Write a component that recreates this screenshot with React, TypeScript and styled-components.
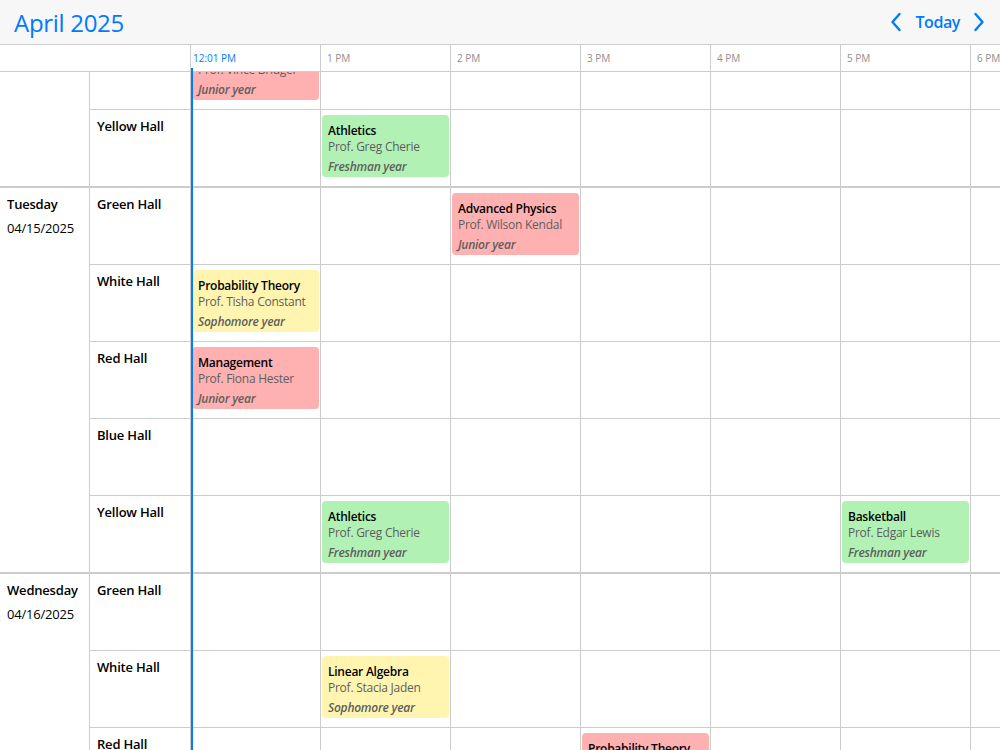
import { useLayoutEffect, useRef } from 'react';
import styled, { createGlobalStyle } from 'styled-components';

type Tone = 'red' | 'green' | 'yellow';

interface Booking {
  hour: number;
  title: string;
  prof: string;
  year: string;
  tone: Tone;
}

interface Resource {
  name: string;
  bookings: Booking[];
}

interface Day {
  name: string;
  date: string;
  resources: Resource[];
}

const HOURS = [12, 13, 14, 15, 16, 17, 18, 19];
const HALLS = ['Green Hall', 'White Hall', 'Red Hall', 'Blue Hall', 'Yellow Hall'];
const NOW_HOUR = 12;

const toneColors: Record<Tone, string> = {
  red: '#ffb1b1',
  green: '#b1f2b4',
  yellow: '#fff5b1'
};

const hourLabel = (h: number) => `${h > 12 ? h - 12 : h} PM`;

const makeDay = (name: string, date: string, bookings: Record<string, Booking[]>): Day => ({
  name,
  date,
  resources: HALLS.map((hall) => ({ name: hall, bookings: bookings[hall] || [] }))
});

const days: Day[] = [
  makeDay('Monday', '04/14/2025', {
    'Blue Hall': [
      { hour: 12, title: 'Computer Science', prof: 'Prof. Vince Bridger', year: 'Junior year', tone: 'red' }
    ],
    'Yellow Hall': [
      { hour: 13, title: 'Athletics', prof: 'Prof. Greg Cherie', year: 'Freshman year', tone: 'green' }
    ]
  }),
  makeDay('Tuesday', '04/15/2025', {
    'Green Hall': [
      { hour: 14, title: 'Advanced Physics', prof: 'Prof. Wilson Kendal', year: 'Junior year', tone: 'red' }
    ],
    'White Hall': [
      { hour: 12, title: 'Probability Theory', prof: 'Prof. Tisha Constant', year: 'Sophomore year', tone: 'yellow' }
    ],
    'Red Hall': [
      { hour: 12, title: 'Management', prof: 'Prof. Fiona Hester', year: 'Junior year', tone: 'red' }
    ],
    'Yellow Hall': [
      { hour: 13, title: 'Athletics', prof: 'Prof. Greg Cherie', year: 'Freshman year', tone: 'green' },
      { hour: 17, title: 'Basketball', prof: 'Prof. Edgar Lewis', year: 'Freshman year', tone: 'green' }
    ]
  }),
  makeDay('Wednesday', '04/16/2025', {
    'White Hall': [
      { hour: 13, title: 'Linear Algebra', prof: 'Prof. Stacia Jaden', year: 'Sophomore year', tone: 'yellow' }
    ],
    'Red Hall': [
      { hour: 15, title: 'Probability Theory', prof: 'Prof. Tisha Constant', year: 'Sophomore year', tone: 'red' }
    ]
  })
];

const Chevron: React.FC<{ dir: 'left' | 'right' }> = ({ dir }) => (
  <svg width='12' height='20' viewBox='0 0 12 20' fill='none'>
    <polyline
      points={dir === 'left' ? '9.5,2 2.5,10 9.5,18' : '2.5,2 9.5,10 2.5,18'}
      stroke='#007aff'
      strokeWidth='2.4'
      strokeLinecap='round'
      strokeLinejoin='round'
    />
  </svg>
);

const App: React.FC = () => {
  const bodyRef = useRef<HTMLDivElement>(null);

  useLayoutEffect(() => {
    if (bodyRef.current) bodyRef.current.scrollTop = 270;
  }, []);

  return (
    <>
      <GlobalStyle />
      <Page>
        <Toolbar>
          <Title>April 2025</Title>
          <Nav>
            <NavButton aria-label='Previous'>
              <Chevron dir='left' />
            </NavButton>
            <TodayButton>Today</TodayButton>
            <NavButton aria-label='Next'>
              <Chevron dir='right' />
            </NavButton>
          </Nav>
        </Toolbar>
        <Frame>
          <HeaderRow>
            <HeaderSpacer />
            {HOURS.map((h) => (
              <HourCell key={h}>{h === NOW_HOUR ? '' : hourLabel(h)}</HourCell>
            ))}
          </HeaderRow>
          <Body ref={bodyRef}>
            {days.map((day) => (
              <DayGroup key={day.date}>
                <DayCell>
                  <DayName>{day.name}</DayName>
                  <DayDate>{day.date}</DayDate>
                </DayCell>
                <Rows>
                  {day.resources.map((res) => (
                    <ResourceRow key={res.name}>
                      <ResourceName>{res.name}</ResourceName>
                      {HOURS.map((h) => {
                        const b = res.bookings.find((x) => x.hour === h);
                        return (
                          <SlotCell key={h}>
                            {b && (
                              <EventCard $tone={b.tone}>
                                <EventTitle>{b.title}</EventTitle>
                                <EventProf>{b.prof}</EventProf>
                                <EventYear>{b.year}</EventYear>
                              </EventCard>
                            )}
                          </SlotCell>
                        );
                      })}
                    </ResourceRow>
                  ))}
                </Rows>
              </DayGroup>
            ))}
          </Body>
          <NowMarker>
            <NowLabel>12:01 PM</NowLabel>
            <NowLine />
          </NowMarker>
        </Frame>
      </Page>
    </>
  );
};

export default App;

const GlobalStyle = createGlobalStyle`
  html, body {
    margin: 0;
    padding: 0;
    background: #ffffff;
  }
  body {
    font-family: 'Open Sans', 'Noto Sans', sans-serif;
    color: #000;
  }
  * {
    box-sizing: border-box;
  }
`;

const Page = styled.div`
  width: 1000px;
  height: 750px;
  display: flex;
  flex-direction: column;
  overflow: hidden;
`;

const Toolbar = styled.div`
  height: 45px;
  flex: none;
  display: flex;
  align-items: center;
  justify-content: space-between;
  padding: 0 14px 0 14px;
  background: #f7f7f7;
  border-bottom: 1px solid #cccccc;
`;

const Title = styled.div`
  font-size: 24px;
  color: #007aff;
  letter-spacing: -0.3px;
  padding-top: 1px;
`;

const Nav = styled.div`
  display: flex;
  align-items: center;
  gap: 9px;
`;

const NavButton = styled.button`
  border: none;
  background: none;
  padding: 0 1px;
  display: flex;
  align-items: center;
  cursor: pointer;
`;

const TodayButton = styled.button`
  border: none;
  background: none;
  padding: 0 3px;
  font-family: inherit;
  font-size: 16px;
  font-weight: 600;
  letter-spacing: -0.4px;
  color: #007aff;
  cursor: pointer;
`;

const Frame = styled.div`
  position: relative;
  flex: 1;
  display: flex;
  flex-direction: column;
  min-height: 0;
`;

const HeaderRow = styled.div`
  height: 27px;
  flex: none;
  display: flex;
  border-bottom: 1px solid #cccccc;
`;

const HeaderSpacer = styled.div`
  width: 191px;
  flex: none;
  border-right: 1px solid #cccccc;
`;

const HourCell = styled.div`
  width: 130px;
  flex: none;
  border-right: 1px solid #cccccc;
  padding-left: 6px;
  display: flex;
  align-items: center;
  font-size: 10px;
  color: #8e8e8e;
`;

const Body = styled.div`
  flex: 1;
  overflow: hidden;
`;

const DayGroup = styled.div`
  display: flex;
  & + & {
    border-top: 2px solid #cccccc;
  }
`;

const DayCell = styled.div`
  width: 90px;
  flex: none;
  border-right: 1px solid #cccccc;
  padding: 6px 7px;
`;

const DayName = styled.div`
  font-size: 13px;
  font-weight: 600;
  line-height: 20px;
  letter-spacing: -0.2px;
`;

const DayDate = styled.div`
  font-size: 13px;
  line-height: 20px;
  margin-top: 4px;
  letter-spacing: -0.2px;
`;

const Rows = styled.div`
  display: flex;
  flex-direction: column;
`;

const ResourceRow = styled.div`
  display: flex;
  height: 76px;
  box-sizing: content-box;
  & + & {
    border-top: 1px solid #cccccc;
  }
`;

const ResourceName = styled.div`
  width: 101px;
  flex: none;
  border-right: 1px solid #cccccc;
  padding: 6px 7px;
  font-size: 13px;
  font-weight: 600;
  line-height: 20px;
  letter-spacing: -0.2px;
`;

const SlotCell = styled.div`
  width: 130px;
  flex: none;
  border-right: 1px solid #cccccc;
  padding: 5px 1px 0 1px;
`;

const EventCard = styled.div<{ $tone: Tone }>`
  height: 62px;
  border-radius: 4px;
  background: ${(p) => toneColors[p.$tone]};
  padding: 8px 6px 2px 6px;
  overflow: hidden;
  white-space: nowrap;
  letter-spacing: -0.25px;
`;

const EventTitle = styled.div`
  font-size: 12px;
  font-weight: 600;
  line-height: 16px;
  color: #000;
`;

const EventProf = styled.div`
  font-size: 12px;
  line-height: 16px;
  color: #5e5e5e;
`;

const EventYear = styled.div`
  font-size: 12px;
  font-style: italic;
  font-weight: 600;
  line-height: 16px;
  margin-top: 4px;
  color: #5e5e5e;
`;

const NowMarker = styled.div`
  position: absolute;
  top: 0;
  bottom: 0;
  left: 191px;
  width: 0;
  pointer-events: none;
`;

const NowLabel = styled.div`
  position: absolute;
  top: 6px;
  left: 2px;
  font-size: 10px;
  line-height: 14px;
  color: #007aff;
  white-space: nowrap;
`;

const NowLine = styled.div`
  position: absolute;
  top: 23px;
  bottom: 0;
  left: 0;
  width: 2px;
  background: #007aff;
`;
